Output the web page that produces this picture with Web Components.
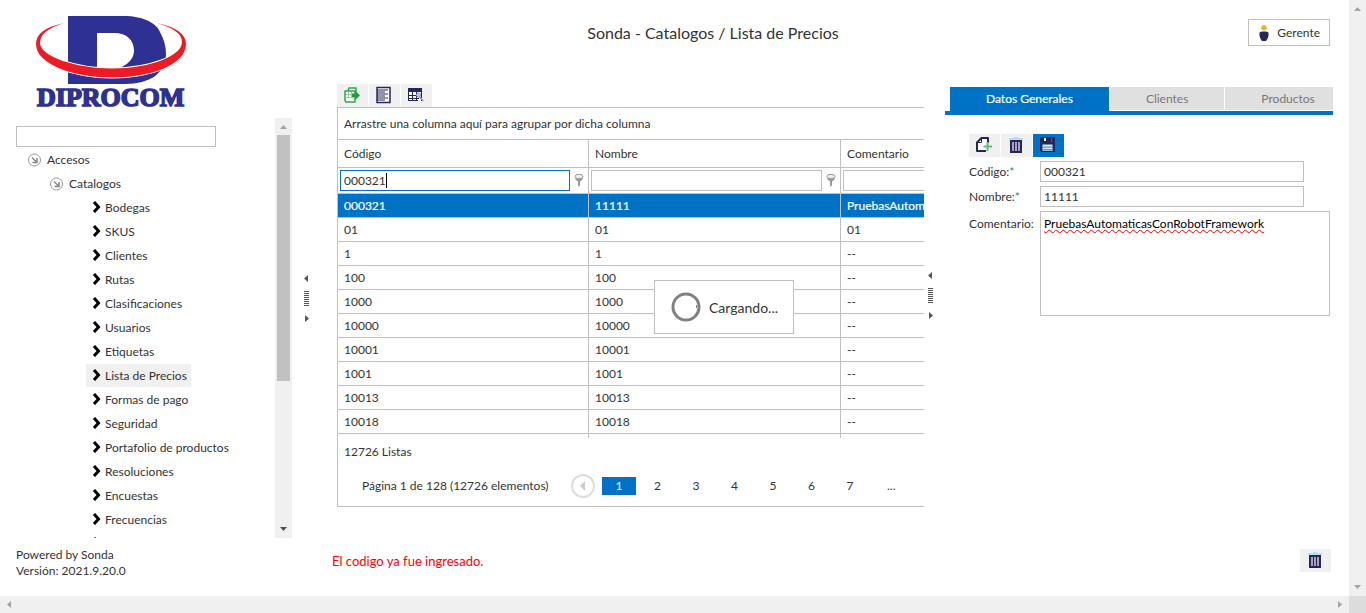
<!DOCTYPE html>
<html lang="es">
<head>
<meta charset="utf-8">
<meta name="viewport" content="width=device-width, initial-scale=1">
<title>Sonda - Lista de Precios</title>
<style>
  html, body { height: 100%; margin: 0; }
  body {
    background: #fff; color: #333; overflow: hidden;
    font: 12px/16px Lato, "Open Sans", sans-serif;
    --line: #c0c0c0; --blue: #0072c6; --bar: #f0f0f0; --navy: #26265a;
  }
</style>
</head>
<body>
<sonda-app></sonda-app>

<script>
const BASE = '*{box-sizing:border-box}:host{display:block}:host([hidden]){display:none}';

/* Registers an element whose shadow root is cloned from a template. */
function define(name, css, html, setup) {
  const tpl = document.createElement('template');
  tpl.innerHTML = `<style>${BASE}${css}</style>${html}`;
  customElements.define(name, class extends HTMLElement {
    constructor() {
      super();
      this.attachShadow({ mode: 'open' }).append(tpl.content.cloneNode(true));
    }
    connectedCallback() { if (setup) setup.call(this, this.shadowRoot); }
  });
}

const ICONS = {
  trash: '<path fill="#b4dff5" d="M1 1h5V0h4v1h5v2H1z"/><path fill="#26265a" d="M2 3h12v13H2z"/><path fill="#a9a0bf" d="M4 5h2v9H4zM7 5h2v9H7zM10 5h2v9h-2z"/>',
  add: '<path fill="#fff" d="M5 0h7v14H1V5z"/><path fill="none" stroke="#26265a" stroke-width="2" stroke-linejoin="round" d="M12 6V1H5.500L1 5.500V14H10"/><path fill="none" stroke="#26265a" d="M5.500 1v4.500H1"/><path stroke="#62bd72" stroke-width="2" d="M11.500 5v9M7.500 9.500h8.500"/>',
  save: '<path fill="#26265a" d="M0 0h15v15H1.500L0 13.500z"/><path fill="#fff" d="M4 1h2v3H4z"/><path fill="#5a5a80" d="M11 1h1v4h-1z"/><path fill="#d5ebf7" d="M2.500 7.500h10V14h-10z"/><path fill="#4f9ed6" d="M3 9.500h9v1.200H3zM3 12h9v1.500H3z"/>',
  export: '<path fill="#fff" stroke="#2ba84a" stroke-width="1.500" stroke-linejoin="round" d="M4 4l1-3h7v10M1 4h10v11H2L1 13.500z"/><path fill="none" stroke="#8fd19e" d="M2 7.500h8M2 10.500h8M4.500 5v6M7.500 5v6"/><path fill="#219a41" d="M8 6.500h3V3.500L16 8.500 11 13v-3H8z"/>',
  list: '<path fill="#fff" stroke="#26265a" stroke-width="1.500" d="M1 0.500h13v15H1z"/><path stroke="#26265a" stroke-width="1.200" d="M1 3h11M1 5h8M1 7h11M1 9h8M1 11h11M1 13h8"/>',
  columns: '<path fill="#fff" d="M0 1h14v13H0z"/><path fill="#26265a" d="M0 1h14v4H0z"/><path fill="none" stroke="#26265a" d="M.500 5v9M4.500 5v9M8.500 5v9M0 8.500h11M0 11.500h11M0 13.500h10M13.500 5v9"/><path stroke="#8292bd" stroke-width="1.500" d="M11 9l4 5"/><circle cx="10.500" cy="8" r="2" fill="#c6d2e8" stroke="#8292bd"/>',
  user: '<circle cx="8" cy="2.700" r="2.700" fill="#f0b323"/><path fill="#26265a" d="M3.500 7.500Q5 6 8 6.500 11 6 12.500 7.500 13 13 10 16H6Q3 13 3.500 7.500z"/>',
  pin: '<ellipse cx="8" cy="3.500" rx="4" ry="2.200" fill="#eee" stroke="#999"/><path fill="#999" d="M4 4.500Q8 7.500 12 4.500 12 7 9 8.500v4l-2 1V8.500Q4 7 4 4.500z"/>',
  chevron: '<path fill="none" stroke="#000" stroke-width="3" d="M5 2l4.500 5-4.500 5"/>',
  open: '<circle cx="7.500" cy="8" r="6" fill="#fff" stroke="#999"/><path fill="none" stroke="#888" stroke-width="1.500" d="M5 5.500l4.500 4.500M10 6v4.500H5.500"/>'
};
customElements.define('app-icon', class extends HTMLElement {
  connectedCallback() {
    if (this.shadowRoot) return;
    this.attachShadow({ mode: 'open' }).innerHTML =
      `<style>${BASE}:host{width:16px;height:16px;flex:none}svg{display:block;overflow:visible}</style>
       <svg width="16" height="16" viewBox="0 0 16 16" aria-hidden="true">${ICONS[this.getAttribute('name')] || ''}</svg>`;
  }
});

define('tool-button', `
  button{display:flex;align-items:center;justify-content:center;width:31px;height:23px;padding:0 1px 1px 0;border:0;background:var(--bar)}
  :host([primary]) button{background:var(--blue)}`,
  '<button type="button"><slot></slot></button>',
  function (r) { r.querySelector('button').setAttribute('aria-label', this.getAttribute('label')); });

define('brand-logo', 'svg{display:block;overflow:visible}', `
  <svg width="150" height="92" viewBox="36 16 150 92" role="img" aria-label="Diprocom">
    <path fill="#2e3192" fill-rule="evenodd" d="M68 16H123C145 16 157 24 160 32 164 39 166 47 166 54 166 73 150 84 125 84H68zM97 33V68H119C128 65 134 58 134 51 134 40 127 33 114 33z"/>
    <path fill="#ed1c24" stroke="#fff" stroke-width="2" paint-order="stroke" d="M64 23C45 27 36 34 36 44 36 65 75 77.500 112 77.500 150 77.500 186 65 186 44 186 34 176 27 157 23 174 28 182 34 182 42 182 56 150 68.500 112 68.500 75 68.500 40 56 40 43 40 34 48 28 64 23z"/>
    <text x="37" y="105.500" font-family="Liberation Serif, serif" font-weight="700" font-size="26" fill="#2e3192" stroke="#2e3192" stroke-width="1.600">DIPROCOM</text>
  </svg>`);

/* Scroll track with arrow ends; the vertical one can hold a thumb. */
define('scroll-track', `
  :host{display:flex;flex-direction:column;justify-content:space-between;background:var(--bar);width:17px}
  :host([horizontal]){flex-direction:row;width:auto;height:17px}
  svg{display:block;flex:none;width:17px;height:17px;fill:#a3a3a3}
  .thumb{display:none}
  :host([thumb]) .thumb{display:block;width:13px;margin:0 2px auto;height:58.500%;background:#c1c1c1}
  :host([thumb]) .end{fill:#505050}
  :host([horizontal]) svg{transform:rotate(-90deg)}`, `
  <svg class="start" viewBox="0 0 17 17"><path d="M5 11h7L8.500 7z"/></svg>
  <div class="thumb"></div>
  <svg class="end" viewBox="0 0 17 17"><path d="M5 6h7L8.500 10z"/></svg>`);

define('pane-splitter', `
  :host{display:flex;flex:none;flex-direction:column;align-items:center;justify-content:center;gap:9px;width:13px}
  svg{display:block;fill:#555}
  i{width:5px;height:15px;background:repeating-linear-gradient(#555 0 1px,#fff 1px 2px)}`, `
  <svg width="5" height="7"><path d="M4 0v7L0 3.500z"/></svg><i></i><svg width="5" height="7"><path d="M1 0v7L5 3.500z"/></svg>`);

define('nav-item', `
  :host{height:24px}
  a{display:inline-flex;align-items:center;height:23px;padding:0 4px 0 3px;color:inherit;text-decoration:none}
  :host([level="1"]){padding-left:24px} :host([level="2"]){padding-left:46px} :host([level="3"]){padding-left:86px}
  :host(:not([level="3"])) a{gap:4px}
  :host([current]) a{background:var(--bar)}`,
  '<a href="#"><app-icon></app-icon><slot></slot></a>',
  function (r) {
    const icon = document.createElement('app-icon');
    icon.setAttribute('name', this.getAttribute('level') === '3' ? 'chevron' : 'open');
    r.querySelector('app-icon').replaceWith(icon);
  });

define('nav-tree', `
  :host{display:flex;flex:1;min-height:0}
  .list{flex:1;min-width:0;overflow:hidden;padding-top:8px}
  input{display:block;width:200px;height:21px;margin:0 0 1px 16px;padding:0 4px;border:1px solid var(--line);font:inherit;outline:0}`, `
  <div class="list">
    <input type="text" aria-label="Buscar en accesos">
    <nav>
      <nav-item level="1">Accesos</nav-item>
      <nav-item level="2">Catalogos</nav-item>
      <nav-item level="3">Bodegas</nav-item>
      <nav-item level="3">SKUS</nav-item>
      <nav-item level="3">Clientes</nav-item>
      <nav-item level="3">Rutas</nav-item>
      <nav-item level="3">Clasificaciones</nav-item>
      <nav-item level="3">Usuarios</nav-item>
      <nav-item level="3">Etiquetas</nav-item>
      <nav-item level="3" current>Lista de Precios</nav-item>
      <nav-item level="3">Formas de pago</nav-item>
      <nav-item level="3">Seguridad</nav-item>
      <nav-item level="3">Portafolio de productos</nav-item>
      <nav-item level="3">Resoluciones</nav-item>
      <nav-item level="3">Encuestas</nav-item>
      <nav-item level="3">Frecuencias</nav-item>
      <nav-item level="3"></nav-item>
    </nav>
  </div>
  <scroll-track thumb></scroll-track>`);

define('side-bar', `
  :host{display:flex;flex:none;flex-direction:column;width:292px;margin-right:8px}
  brand-logo{flex:none;height:118px;padding:16px 36px 0}
  footer{flex:none;height:58px;padding:9px 16px 0}`, `
  <brand-logo></brand-logo>
  <nav-tree></nav-tree>
  <footer>Powered by Sonda<br>Versión: 2021.9.20.0</footer>`);

define('page-header', `
  :host{display:grid;flex:none;grid-template-columns:1fr 236px;height:67px;padding-top:19px;align-items:start}
  h1{margin:0;font-size:16px;line-height:28px;font-weight:400;text-align:center}
  button{display:flex;align-items:center;gap:5px;justify-self:end;height:27px;margin-right:19px;padding:0 9px 0 7px;background:#fff;border:1px solid var(--line);font:inherit;color:inherit}`, `
  <h1><slot></slot></h1>
  <button type="button"><app-icon name="user"></app-icon>Gerente</button>`);

define('loading-panel', `
  :host{display:flex;align-items:center;gap:8px;width:140px;height:54px;padding-left:16px;background:#fff;border:1px solid var(--line);font-size:14px;line-height:20px}
  svg{flex:none}
  span{padding-top:2px}`, `
  <svg width="30" height="30"><circle cx="15" cy="15" r="13" fill="none" stroke="#808080" stroke-width="3"/><path stroke="#808080" d="M25.500 13v3"/></svg>
  <span role="status"><slot></slot></span>`);

const ROWS = [['000321', '11111', 'PruebasAutomaticasConRobotFramework'], ['01', '01', '01'], ['1', '1', '--'],
  ['100', '100', '--'], ['1000', '1000', '--'], ['10000', '10000', '--'], ['10001', '10001', '--'],
  ['1001', '1001', '--'], ['10013', '10013', '--'], ['10018', '10018', '--'], ['', '', '']];

define('price-grid', `
  :host{display:flex;flex:1;flex-direction:column;min-width:0;padding:17px 0 17px 24px;overflow:hidden}
  .tools{display:flex;flex:none;gap:1px}
  .box{position:relative;display:flex;flex:1;flex-direction:column;min-height:0;width:774px;border:1px solid var(--line)}
  .group{flex:none;height:32px;padding:8px 6px;border-bottom:1px solid var(--line)}
  .view{flex:1;min-height:0;overflow:hidden}
  table{width:100%;table-layout:fixed;border-collapse:separate;border-spacing:0}
  .c1{width:251px} .c2{width:252px}
  th,td{height:24px;padding:0 6px;border:solid var(--line);border-width:0 1px 1px 0;text-align:left;font-weight:400;white-space:nowrap}
  .titles th{height:28px}
  .filters td{height:26px;padding:0 1px 0 2px}
  .filter{display:flex;align-items:center;gap:1px}
  .filter input{flex:1;min-width:0;height:21px;padding:0 3px;border:1px solid var(--line);outline:0;font:inherit;color:inherit}
  /* The active filter paints its own steady caret after the value. */
  .filter input.active{border-color:var(--blue);caret-color:transparent;background:linear-gradient(#000,#000) 45px 2px/1px 15px no-repeat #fff}
  .selected td{background:var(--blue);color:#fff;-webkit-text-stroke:.2px #fff}
  .total{flex:none;height:28px;padding:6px}
  .pager{display:flex;flex:none;align-items:center;height:40px;padding-left:24px}
  .pager span{width:209px}
  .pager button{display:grid;place-items:center;width:24px;height:24px;margin-right:7px;padding:0;border:2px solid #ddd;border-radius:50%;background:#fff}
  .pages{display:flex;justify-content:space-between;width:265px}
  .pages a,.pages b{width:34px;line-height:18px;text-align:center;font-weight:400;color:inherit;text-decoration:none}
  .pages b{background:var(--blue);color:#fff}
  .more{margin-left:20px}
  loading-panel{position:absolute;inset:0;margin:auto}`, `
  <div class="tools">
    <tool-button label="Exportar"><app-icon name="export"></app-icon></tool-button>
    <tool-button label="Ver detalle"><app-icon name="list"></app-icon></tool-button>
    <tool-button label="Elegir columnas"><app-icon name="columns"></app-icon></tool-button>
  </div>
  <div class="box">
    <div class="group">Arrastre una columna aquí para agrupar por dicha columna</div>
    <div class="view">
      <table>
        <colgroup><col class="c1"><col class="c2"><col></colgroup>
        <thead>
          <tr class="titles"><th>Código</th><th>Nombre</th><th>Comentario</th></tr>
          <tr class="filters">
            <td><div class="filter"><input class="active" type="text" value="000321" aria-label="Filtrar código"><app-icon name="pin"></app-icon></div></td>
            <td><div class="filter"><input type="text" aria-label="Filtrar nombre"><app-icon name="pin"></app-icon></div></td>
            <td><div class="filter"><input type="text" aria-label="Filtrar comentario"><app-icon name="pin"></app-icon></div></td>
          </tr>
        </thead>
        <tbody></tbody>
      </table>
    </div>
    <div class="total">12726 Listas</div>
    <div class="pager">
      <span>Página 1 de 128 (12726 elementos)</span>
      <button type="button" aria-label="Anterior" disabled><svg width="8" height="10" fill="#ccc"><path d="M6 0v10L1 5z"/></svg></button>
      <nav class="pages"><b>1</b><a href="#">2</a><a href="#">3</a><a href="#">4</a><a href="#">5</a><a href="#">6</a><a href="#">7</a></nav>
      <div class="more">...</div>
    </div>
    <loading-panel>Cargando...</loading-panel>
  </div>`,
  function (r) {
    r.querySelector('tbody').innerHTML = ROWS.map((row, i) =>
      `<tr${i ? '' : ' class="selected"'}>${row.map(c => `<td>${c}</td>`).join('')}</tr>`).join('');
  });

define('tab-strip', `
  :host{display:flex;gap:1px;height:28px;padding-left:5px;border-bottom:4px solid var(--blue);overflow:hidden}
  button{flex:none;height:23px;padding:0 36px;border:0;background:#e0e0e0;color:#777;font:inherit;line-height:24px;white-space:nowrap}
  button[aria-selected="true"]{height:24px;background:var(--blue);color:#fff;-webkit-text-stroke:.2px #fff}`, `
  <button type="button" role="tab" aria-selected="true">Datos Generales</button>
  <button type="button" role="tab" aria-selected="false">Clientes</button>
  <button type="button" role="tab" aria-selected="false">Productos</button>`);

define('detail-form', `
  :host{flex:none;width:412px;padding:20px 16px 0 8px}
  .tools{display:flex;gap:1px;margin:19px 0 4px 24px}
  form{display:grid;grid-template-columns:71px 264px;row-gap:4px;margin-left:24px}
  label{line-height:21px;white-space:nowrap}
  label em{font-style:normal;color:#2f7f6f}
  label.tall{padding-top:2px}
  input,textarea{border:1px solid var(--line);font:inherit;color:inherit;outline:0;background:#fff;border-radius:0}
  input{height:21px;padding:0 3px}
  textarea{width:290px;height:105px;padding:4px 3px;resize:none;color:#000;text-decoration:underline wavy #e00 1px}`, `
  <tab-strip></tab-strip>
  <div class="tools">
    <tool-button label="Nuevo"><app-icon name="add"></app-icon></tool-button>
    <tool-button label="Eliminar"><app-icon name="trash"></app-icon></tool-button>
    <tool-button label="Guardar" primary><app-icon name="save"></app-icon></tool-button>
  </div>
  <form>
    <label for="code">Código:<em>*</em></label><input id="code" type="text" value="000321">
    <label for="name">Nombre:<em>*</em></label><input id="name" type="text" value="11111">
    <label for="note" class="tall">Comentario:</label><textarea id="note" spellcheck="false">PruebasAutomaticasConRobotFramework</textarea>
  </form>`);

define('status-footer', `
  :host{display:flex;flex:none;justify-content:space-between;height:72px;padding:25px 18px 0 19px}
  p{margin:0;font-size:13px;line-height:25px;color:#f00}`, `
  <p role="alert"><slot></slot></p>
  <tool-button label="Limpiar"><app-icon name="trash"></app-icon></tool-button>`);

define('sonda-app', `
  :host{display:grid;grid-template:minmax(0,1fr) 17px / minmax(0,1fr) 17px;height:100vh}
  .page{display:flex;min-height:0}
  main{display:flex;flex:1;flex-direction:column;min-width:0}
  .panes{display:flex;flex:1;min-height:0}
  .corner{background:#dcdcdc}`, `
  <div class="page">
    <side-bar></side-bar>
    <pane-splitter></pane-splitter>
    <main>
      <page-header>Sonda - Catalogos / Lista de Precios</page-header>
      <div class="panes">
        <price-grid></price-grid>
        <pane-splitter></pane-splitter>
        <detail-form></detail-form>
      </div>
      <status-footer>El codigo ya fue ingresado.</status-footer>
    </main>
  </div>
  <scroll-track></scroll-track>
  <scroll-track horizontal></scroll-track>
  <div class="corner"></div>`);
</script>
</body>
</html>
